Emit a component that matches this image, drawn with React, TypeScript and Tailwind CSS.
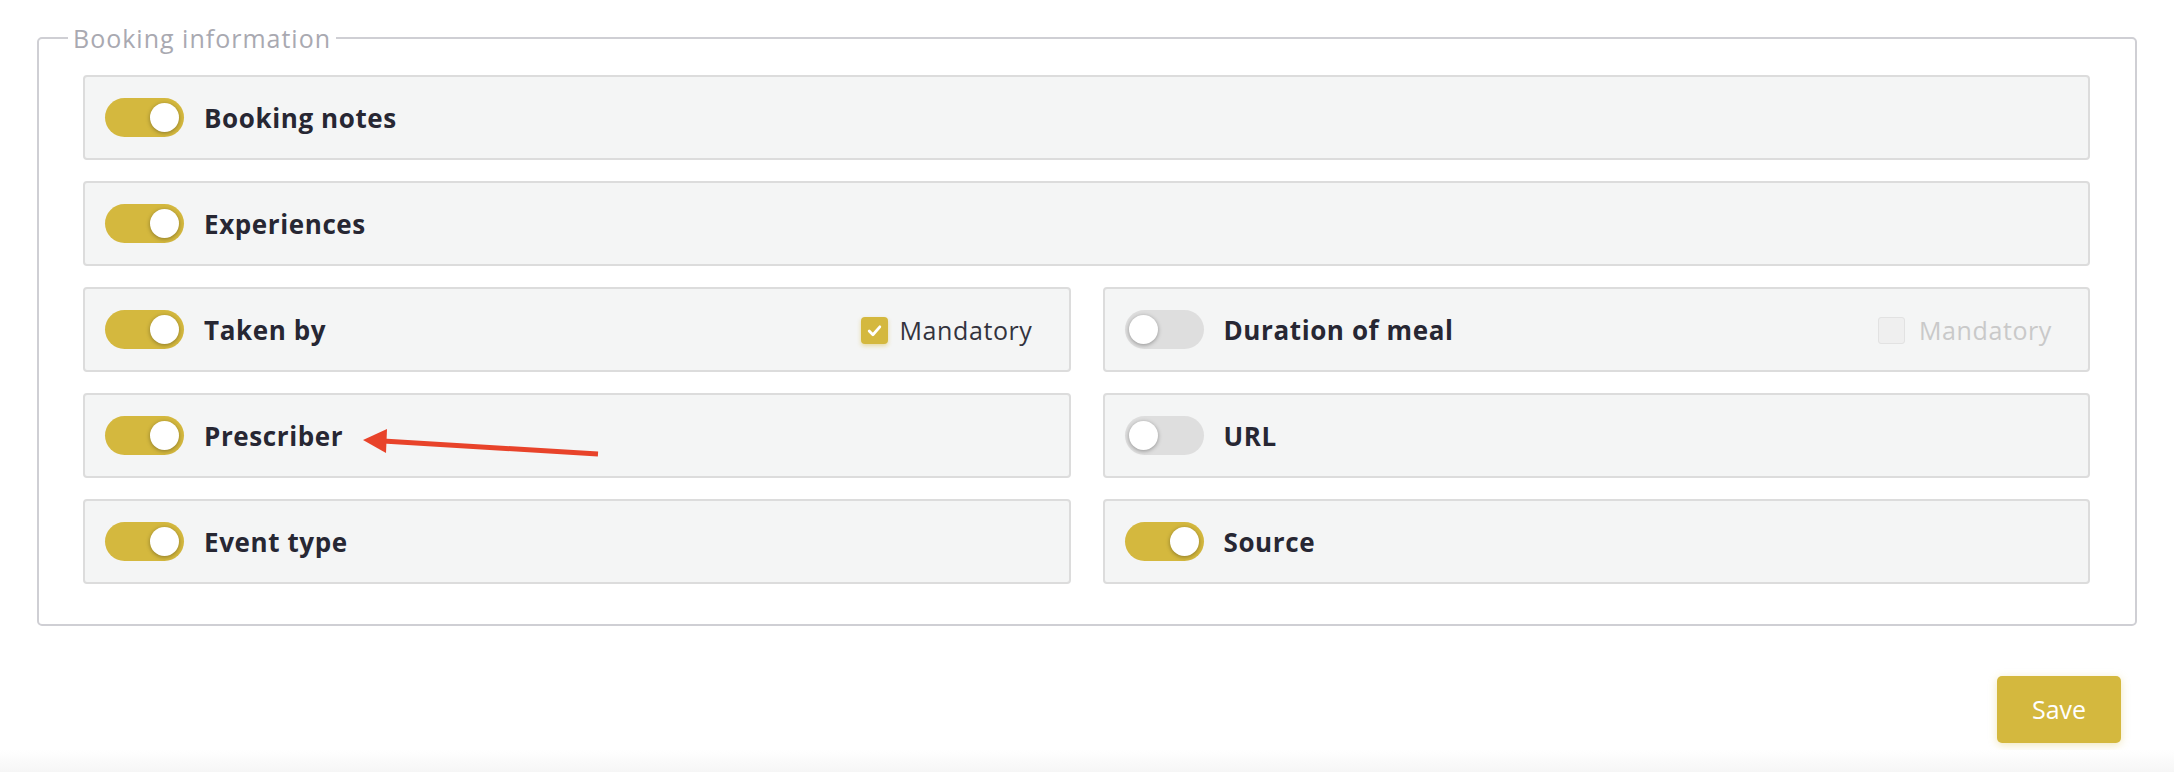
import React from "react";

type Item = { label: string; on: boolean; mandatory?: "checked" | "disabled" };

function Toggle({ on }: { on: boolean }) {
  return (
    <div
      className={
        "relative h-[39px] w-[79px] shrink-0 rounded-full " +
        (on ? "bg-[#d4b83e]" : "bg-[#dedede]")
      }
    >
      <div
        className={
          "absolute top-[5px] h-[29px] w-[29px] rounded-full bg-white shadow-[0_1px_4px_rgba(0,0,0,0.35)] " +
          (on ? "right-[5px]" : "left-[4px]")
        }
      />
    </div>
  );
}

function Card({ item }: { item: Item }) {
  return (
    <div className="flex h-[85px] items-center rounded-[4px] border-2 border-[#dcdcdc] bg-[#f4f5f5] pl-[20px] pr-[36px]">
      <Toggle on={item.on} />
      <span className="ml-[20px] flex-1 pt-[2px] text-[26px] font-bold tracking-[0.6px] text-[#272733]">{item.label}</span>
      {item.mandatory === "checked" && (
        <div className="flex items-center gap-[12px] pt-[2px]">
          <div className="flex h-[27px] w-[27px] items-center justify-center rounded-[4px] bg-[#d4b83e] shadow-[0_2px_4px_rgba(212,184,62,0.45)]">
            <svg width="17" height="17" viewBox="0 0 16 16" fill="none">
              <path d="M3 8.5 L6.5 12 L13 4.5" stroke="white" strokeWidth="2.6" strokeLinecap="round" strokeLinejoin="round" />
            </svg>
          </div>
          <span className="text-[25px] tracking-[0.6px] text-[#33333d]">Mandatory</span>
        </div>
      )}
      {item.mandatory === "disabled" && (
        <div className="flex items-center gap-[14px] pt-[2px]">
          <div className="h-[27px] w-[27px] rounded-[3px] border border-[#e2e2e2] bg-[#efefef]" />
          <span className="text-[25px] tracking-[0.6px] text-[#c9c9c9]">Mandatory</span>
        </div>
      )}
    </div>
  );
}

export default function App() {
  const left: Item[] = [
    { label: "Taken by", on: true, mandatory: "checked" },
    { label: "Prescriber", on: true },
    { label: "Event type", on: true },
  ];
  const right: Item[] = [
    { label: "Duration of meal", on: false, mandatory: "disabled" },
    { label: "URL", on: false },
    { label: "Source", on: true },
  ];
  return (
    <div
      className="relative h-[772px] w-full overflow-hidden bg-white"
      style={{ fontFamily: "'Open Sans', 'Noto Sans', sans-serif" }}
    >
      <fieldset className="mx-[37px] mt-[24px] rounded-[5px] border-2 border-[#cfcfd4] pl-[44px] pr-[45px] pt-[23px] pb-[40px]">
        <legend className="-ml-[15px] px-[5px] text-[25px] leading-[28px] tracking-[1px] text-[#a9a9b1]">Booking information</legend>
        <div className="flex flex-col gap-[21px]">
          <Card item={{ label: "Booking notes", on: true }} />
          <Card item={{ label: "Experiences", on: true }} />
          <div className="grid grid-cols-2 gap-x-[32px] gap-y-[21px]">
            {left.map((l, i) => (
              <React.Fragment key={i}>
                <Card item={l} />
                <Card item={right[i]} />
              </React.Fragment>
            ))}
          </div>
        </div>
      </fieldset>
      <div className="mt-[50px] flex justify-end pr-[53px]">
        <button className="h-[67px] w-[124px] rounded-[5px] bg-[#d4b83e] text-[25px] text-white shadow-[0_2px_8px_rgba(212,184,62,0.35)]">
          Save
        </button>
      </div>
      <div className="absolute bottom-0 left-0 h-[22px] w-full bg-gradient-to-b from-white to-[#f6f6f6]" />
      <svg
        className="absolute left-[355px] top-[420px]"
        width="260"
        height="45"
        viewBox="0 0 260 45"
      >
        <line x1="28" y1="21" x2="243" y2="34" stroke="#e8432a" strokeWidth="5" strokeLinecap="butt" />
        <polygon points="8,20 32,9 31,33" fill="#e8432a" />
      </svg>
    </div>
  );
}
